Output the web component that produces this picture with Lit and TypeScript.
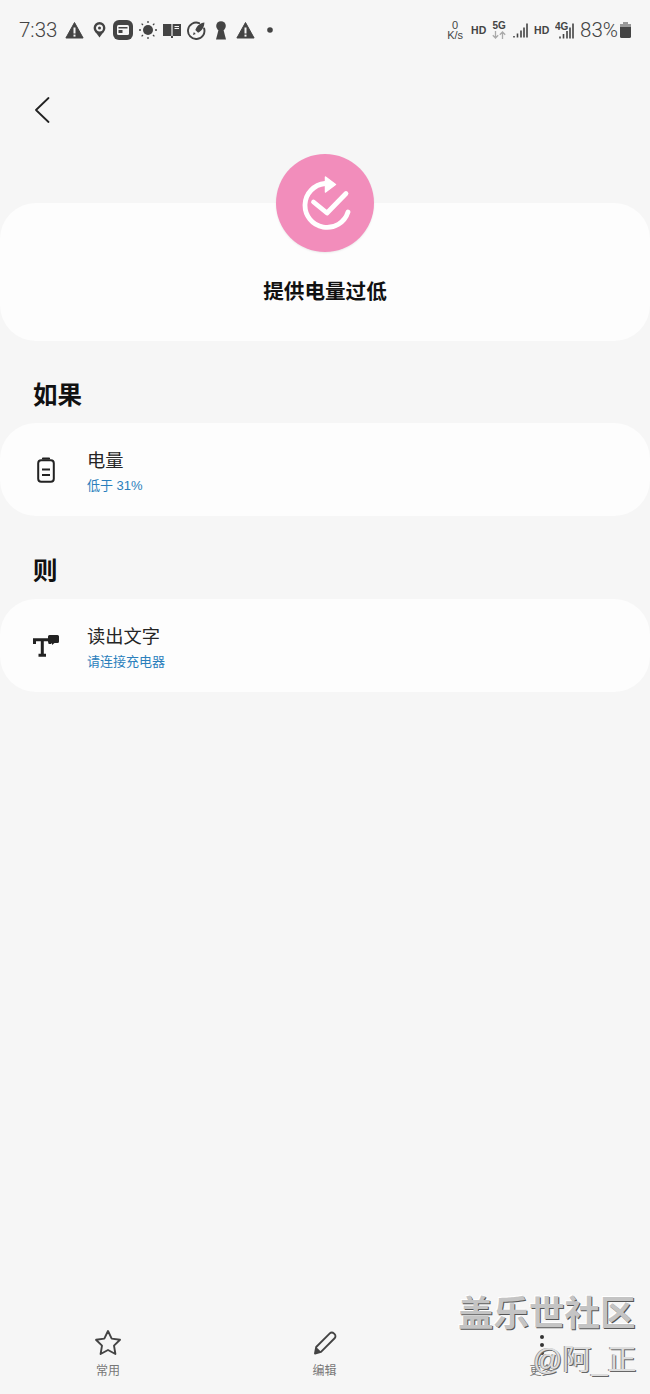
import { LitElement, html, css, svg } from 'lit';
import { customElement } from 'lit/decorators.js';

const warn = svg`<path d="M9 1.500 17.600 17H.4Z" fill="#444" stroke="#444" stroke-linejoin="round"/><rect x="8" y="6.500" width="2" height="6" fill="#f6f6f6"/><rect x="8" y="13.600" width="2" height="2" fill="#f6f6f6"/>`;

@customElement('app-root')
export class AppRoot extends LitElement {
  static styles = css`
    :host {
      display: block;
      position: relative;
      width: 650px;
      height: 1394px;
      overflow: hidden;
      background: #f6f6f6;
      font-family: 'Liberation Sans', 'Noto Sans CJK SC', sans-serif;
      color: #111;
    }

    svg { display: block; flex: none; }

    /* status bar */
    .status {
      height: 60px;
      padding: 0 19px 0 19px;
      box-sizing: border-box;
      display: flex;
      align-items: center;
      color: #444;
    }
    .time { font-family: Roboto, sans-serif; font-weight: 300; font-size: 20.500px; margin-right: 7px; width: 39px; }
    .left-icons { display: flex; align-items: center; }
    .spacer { flex: 1; }
    .right-icons { display: flex; align-items: center; }
    .speed { font-size: 11px; line-height: 10px; text-align: center; width: 18px; margin-right: 7px; }
    .hd { font-size: 10.500px; font-weight: 700; width: 14px; margin-right: 7px; }
    .net { width: 14px; margin-right: 7px; display: flex; flex-direction: column; align-items: center; font-size: 10px; line-height: 10px; font-weight: 700; }
    .pct { font-family: Roboto, sans-serif; font-weight: 300; font-size: 20.500px; margin-left: 6px; }

    .back { height: 100px; padding: 37px 0 0 34px; box-sizing: border-box; }

    /* header card */
    .hero {
      position: relative;
      height: 138px;
      margin-top: 43px;
      background: #fdfdfd;
      border-radius: 36px;
      display: flex;
      justify-content: center;
      align-items: flex-end;
      padding-bottom: 35px;
      box-sizing: border-box;
    }
    .badge {
      position: absolute;
      left: 276px;
      top: -49px;
      width: 98px;
      height: 98px;
      border-radius: 50%;
      background: #f28dbb;
      box-shadow: 0 1px 2px rgba(0, 0, 0, 0.08);
      display: flex;
      align-items: center;
      justify-content: center;
    }
    .hero h1 { margin: 0; font-size: 20.600px; line-height: 28px; font-weight: 700; color: #111; }

    h2 {
      margin: 0;
      padding-left: 33px;
      font-size: 24.500px;
      line-height: 34px;
      font-weight: 700;
      color: #111;
    }
    .sec { padding-top: 38px; }
    .sec + .sec { padding-top: 39px; }

    .card {
      margin-top: 10px;
      height: 93px;
      background: #fdfdfd;
      border-radius: 36px;
      display: flex;
      align-items: center;
    }
    .card .ic { width: 87px; display: flex; box-sizing: border-box; }
    .card .ic.batt { padding-left: 37px; }
    .card .ic.tts { padding-left: 33px; }
    .texts { padding-top: 3px; }
    .title { font-size: 18.250px; line-height: 24px; color: #252525; }
    .sub { font-size: 13px; line-height: 17px; margin-top: 4px; color: #2a7fbc; }

    /* bottom bar */
    .bar {
      position: absolute;
      left: 0;
      right: 0;
      top: 1329px;
      display: grid;
      grid-template-columns: 216px 217px 217px;
    }
    .tab {
      display: flex;
      flex-direction: column;
      align-items: center;
      gap: 4px;
      font-size: 12px;
      line-height: 16px;
      color: #777;
    }
    .tab .box { height: 30px; display: flex; align-items: center; justify-content: center; }

    /* watermark */
    .wm {
      position: absolute;
      white-space: nowrap;
      color: #c4c4c4;
      text-shadow: 1px 1px 0 #555, -1px -1px 0 #fff;
    }
    .wm1 { left: 458px; top: 1294px; font-size: 35.500px; line-height: 40px; font-weight: 700; }
    .wm2 { left: 533px; top: 1342px; font-size: 29px; line-height: 36px; color: #ddd; text-shadow: 1px 1px 0 #666, -1px 0 0 #999; }
  `;

  render() {
    return html`
      <div class="status">
        <span class="time">7:33</span>
        <div class="left-icons">
          <svg width="19" height="18" viewBox="0 0 18 18" style="margin-right:9px">${warn}</svg>
          <svg width="13" height="18" viewBox="0 0 13 18" style="margin-right:7px">
            <circle cx="6.500" cy="7" r="4.700" fill="none" stroke="#444" stroke-width="2.400"/>
            <path d="M2.500 11 6.500 16.500 10.500 11Z" fill="#444"/>
            <circle cx="6.500" cy="7" r="1.500" fill="#444"/>
          </svg>
          <svg width="20" height="20" viewBox="0 0 20 20" style="margin-right:6px">
            <rect width="20" height="20" rx="6" fill="#444"/>
            <rect x="4" y="5" width="12" height="10" rx="1.500" fill="#f6f6f6"/>
            <rect x="5.500" y="7" width="9" height="1.500" fill="#444"/>
            <rect x="5.500" y="10" width="4" height="3" fill="#444"/>
          </svg>
          <svg width="18" height="18" viewBox="0 0 18 18" style="margin-right:6px">
            <circle cx="9" cy="9" r="5" fill="#444"/>
            <path d="M9 0v2M9 16v2M0 9h2M16 9h2M2.600 2.600 4 4M14 14l1.400 1.400M2.600 15.400 4 14M14 4l1.400-1.400" stroke="#444" stroke-width="1.300"/>
          </svg>
          <svg width="18" height="15" viewBox="0 0 18 15" style="margin-right:6px">
            <path d="M0 1h8.400v12H0ZM9.600 1H18v12H9.600ZM8 13h2v2H8Z" fill="#444"/>
            <path d="M11.500 3.500h4.500M11.500 5.500h4.500" stroke="#f6f6f6"/>
          </svg>
          <svg width="19" height="19" viewBox="0 0 18 18" style="margin-right:9px">
            <path d="M11.500 2A7.800 7.800 0 1 0 16.200 7" fill="none" stroke="#444" stroke-width="1.800" stroke-linecap="round"/>
            <path d="M16.500 1.500c-4 .4-7 3-8.600 7l2.600 2.600c3.600-1.600 5.800-5 6-9.600ZM6.500 10.500l1.800 1.800-2.700.9Z" fill="#444"/>
          </svg>
          <svg width="12" height="19" viewBox="0 0 12 19" style="margin-right:9px">
            <circle cx="6" cy="5" r="4.800" fill="#444"/>
            <path d="M4 7h4l3 11.500H1Z" fill="#444"/>
          </svg>
          <svg width="19" height="18" viewBox="0 0 18 18" style="margin-right:12px">${warn}</svg>
          <svg width="6" height="6" viewBox="0 0 6 6"><circle cx="3" cy="3" r="2.800" fill="#444"/></svg>
        </div>
        <div class="spacer"></div>
        <div class="right-icons">
          <div class="speed">0<br />K/s</div>
          <span class="hd">HD</span>
          <div class="net">
            <span>5G</span>
            <svg width="14" height="8" viewBox="0 0 14 8">
              <path d="M3.500 0v7M.8 4.300 3.500 7l2.700-2.700M10.500 8V1M7.800 3.700 10.500 1l2.700 2.700" fill="none" stroke="#aaa" stroke-width="1.300"/>
            </svg>
          </div>
          <svg width="15" height="15" viewBox="0 0 15 15" style="margin-right:6px">
            <path d="M1 13v1.500M4.500 10.500v4M8 7.500v7M11 4.500v10M14 .5v14" stroke="#444" stroke-width="1.600"/>
          </svg>
          <span class="hd">HD</span>
          <svg width="19" height="17" viewBox="0 0 19 17">
            <text x="0" y="8" font-size="10" font-weight="700" fill="#444">4G</text>
            <path d="M5 14.500v2M8.500 12v4.500M12 9v7.500M15 5.500v11M18 1.500v15" stroke="#444" stroke-width="1.600"/>
          </svg>
          <span class="pct">83%</span>
          <svg width="11" height="16" viewBox="0 0 11 16" style="margin-left:2px">
            <path d="M3 0h5v2H3Z" fill="#999"/>
            <rect y="2" width="11" height="3" fill="#999"/>
            <path d="M0 5h11v9.500a1.500 1.500 0 0 1-1.500 1.500h-8A1.500 1.500 0 0 1 0 14.500Z" fill="#444"/>
          </svg>
        </div>
      </div>

      <div class="back">
        <svg width="16" height="26" viewBox="0 0 16 26">
          <path d="M14.500 1 2 13l12.500 12" fill="none" stroke="#222" stroke-width="1.800" stroke-linecap="round" stroke-linejoin="round"/>
        </svg>
      </div>

      <div class="hero">
        <div class="badge">
          <svg width="52" height="56" viewBox="0 0 52 56">
            <path d="M49 37A22 22 0 1 1 26 8.500" fill="none" stroke="#fff" stroke-width="4.800" stroke-linecap="round"/>
            <path d="M26.500 2 36.500 9.500 26.500 17Z" fill="#fff" stroke="#fff" stroke-width="1.500" stroke-linejoin="round"/>
            <path d="M14.500 27 28 38 47 18.500" fill="none" stroke="#fff" stroke-width="4.800" stroke-linecap="round" stroke-linejoin="round"/>
          </svg>
        </div>
        <h1>提供电量过低</h1>
      </div>

      <section class="sec">
        <h2>如果</h2>
        <div class="card">
          <div class="ic batt">
            <svg width="18" height="26" viewBox="0 0 18 26">
              <path d="M6 1.500h6" stroke="#222" stroke-width="2.200" stroke-linecap="round"/>
              <rect x="1.200" y="3.200" width="15.600" height="21.600" rx="3" fill="none" stroke="#222" stroke-width="2"/>
              <path d="M5 12.500h8M5 18h8" stroke="#222" stroke-width="2"/>
            </svg>
          </div>
          <div class="texts">
            <div class="title">电量</div>
            <div class="sub">低于 31%</div>
          </div>
        </div>
      </section>

      <section class="sec">
        <h2>则</h2>
        <div class="card">
          <div class="ic tts">
            <svg width="26" height="22" viewBox="0 0 26 22">
              <path d="M1.500 9V4.800H17V9M9.300 4.800V20M5.500 20.200H13" fill="none" stroke="#222" stroke-width="3"/>
              <path d="M15 1.500a1.500 1.500 0 0 1 1.500-1.500h8a1.500 1.500 0 0 1 1.500 1.500v5a1.500 1.500 0 0 1-1.500 1.500h-3L19 10V8h-2.500A1.500 1.500 0 0 1 15 6.500Z" fill="#222"/>
            </svg>
          </div>
          <div class="texts">
            <div class="title">读出文字</div>
            <div class="sub">请连接充电器</div>
          </div>
        </div>
      </section>

      <div class="bar">
        <div class="tab">
          <div class="box">
            <svg width="28" height="27" viewBox="0 0 28 27" style="margin-top:-3px">
              <path d="M14 2 17.700 9.600 26 10.800 20 16.600 21.400 25 14 21 6.600 25 8 16.600 2 10.800 10.300 9.600Z" fill="none" stroke="#444" stroke-width="1.900" stroke-linejoin="round"/>
            </svg>
          </div>
          <span>常用</span>
        </div>
        <div class="tab">
          <div class="box">
            <svg width="24" height="24" viewBox="0 0 24 24" style="margin-top:-2px">
              <path d="M2 22.500 3.200 16 16.800 2.400a2.800 2.800 0 0 1 4 0l.8.800a2.800 2.800 0 0 1 0 4L8 20.800Z" fill="none" stroke="#444" stroke-width="1.900" stroke-linejoin="round"/>
              <path d="M2 22.500 3.200 16 8 20.800Z" fill="#444"/>
            </svg>
          </div>
          <span>编辑</span>
        </div>
        <div class="tab">
          <div class="box">
            <svg width="6" height="24" viewBox="0 0 6 24">
              <circle cx="3" cy="5" r="2" fill="#333"/><circle cx="3" cy="13" r="2" fill="#333"/><circle cx="3" cy="21" r="2" fill="#333"/>
            </svg>
          </div>
          <span>更多</span>
        </div>
      </div>

      <div class="wm wm1">盖乐世社区</div>
      <div class="wm wm2">@阿_正</div>
    `;
  }
}
